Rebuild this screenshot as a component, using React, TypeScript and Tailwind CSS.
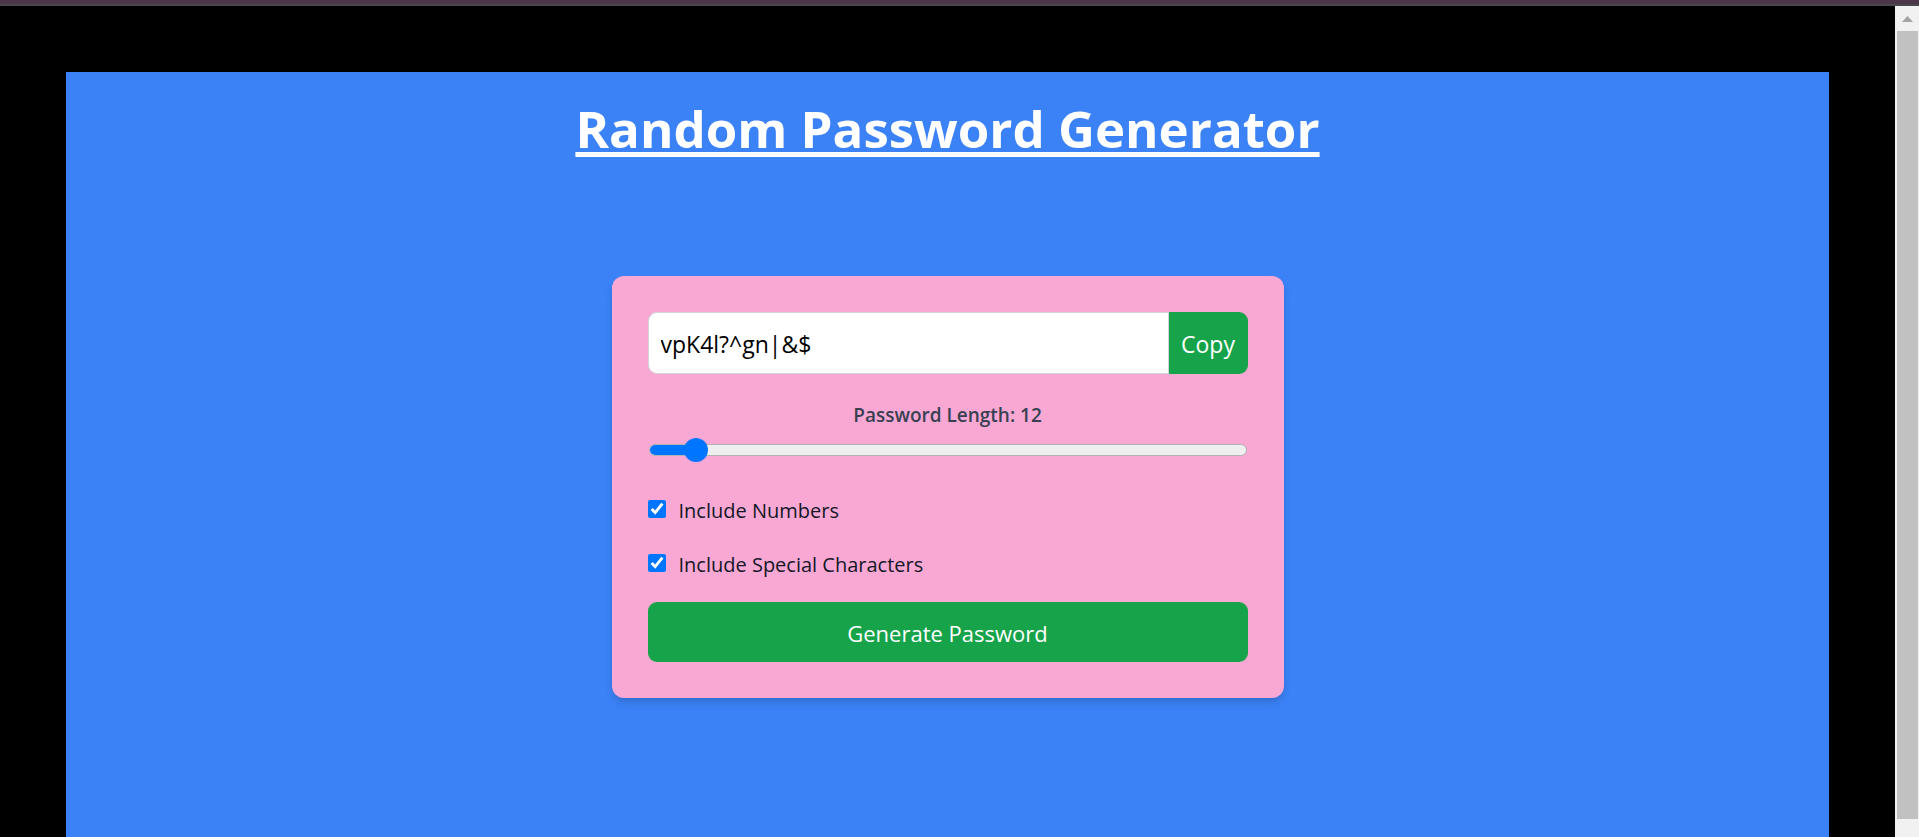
import { useId, useState } from "react";

const MIN_LENGTH = 6;
const MAX_LENGTH = 100;
const LETTERS = "ABCDEFGHIJKLMNOPQRSTUVWXYZabcdefghijklmnopqrstuvwxyz";
const DIGITS = "0123456789";
const SPECIALS = "!@#$%^&*?|~+-=_";

function createPassword(length: number, numbers: boolean, specials: boolean) {
  const pool = LETTERS + (numbers ? DIGITS : "") + (specials ? SPECIALS : "");
  return Array.from({ length }, () => pool[Math.floor(Math.random() * pool.length)]).join("");
}

type OptionProps = { label: string; checked: boolean; onChange: (value: boolean) => void };

function Option({ label, checked, onChange }: OptionProps) {
  const id = useId();
  return (
    <div className="flex h-[54px] items-start">
      <input
        id={id}
        type="checkbox"
        checked={checked}
        onChange={(event) => onChange(event.target.checked)}
        className="mt-2.5 size-[18px] accent-[#0075ff]"
      />
      <label htmlFor={id} className="pl-[13px] text-[20px] leading-[42px] text-[#111827]">
        {label}
      </label>
    </div>
  );
}

function LengthSlider({ id, value, onChange }: { id: string; value: number; onChange: (n: number) => void }) {
  const ratio = (value - MIN_LENGTH) / (MAX_LENGTH - MIN_LENGTH);
  const fill = `calc(12px + (100% - 24px) * ${ratio})`;
  return (
    <div className="grid h-6 items-center">
      <div className="relative col-start-1 row-start-1 mx-px h-3 overflow-hidden rounded-full border border-[#b2b2b2] bg-[#efefef]">
        <div className="absolute -inset-y-px -left-px bg-[#0075ff]" style={{ width: fill }} />
      </div>
      <input
        id={id}
        type="range"
        min={MIN_LENGTH}
        max={MAX_LENGTH}
        value={value}
        onChange={(event) => onChange(Number(event.target.value))}
        className="z-10 col-start-1 row-start-1 h-6 w-full appearance-none bg-transparent [&::-webkit-slider-thumb]:size-6 [&::-webkit-slider-thumb]:appearance-none [&::-webkit-slider-thumb]:rounded-full [&::-webkit-slider-thumb]:bg-[#0075ff]"
      />
    </div>
  );
}

function ScrollRail() {
  return (
    <div aria-hidden="true" className="flex w-6 shrink-0 flex-col bg-[#f1f1f1] pr-px pb-[18px] pl-0.5">
      <div className="flex h-[25px] items-center justify-center">
        <svg width="11" height="6" viewBox="0 0 11 6" fill="#a3a3a3">
          <path d="M5.5 0 11 6H0z" />
        </svg>
      </div>
      <div className="grow bg-[#c1c1c1]" />
    </div>
  );
}

export default function App() {
  const lengthId = useId();
  const [length, setLength] = useState(12);
  const [numbers, setNumbers] = useState(true);
  const [specials, setSpecials] = useState(true);
  const [password, setPassword] = useState("vpK4l?^gn|&$");

  return (
    <div className="flex h-screen flex-col bg-black font-['Open_Sans','Noto_Sans',sans-serif]">
      <div className="h-1.5 shrink-0 border-b-2 border-[#4a474a] bg-[#4b364a]" />
      <div className="flex min-h-0 grow">
        <div className="flex min-w-0 grow px-[66px] pt-[66px]">
          <main className="flex grow flex-col items-center bg-[#3b82f6] pt-5">
            <h1 className="text-center text-[51px] leading-[72px] font-bold text-white underline decoration-[5px] underline-offset-[4px]">
              Random Password Generator
            </h1>
            <section className="mt-28 w-full max-w-[672px] rounded-xl bg-[#f9a8d4] p-9 shadow-[0_6px_9px_-1px_rgba(0,0,0,0.1),0_3px_6px_-2px_rgba(0,0,0,0.1)]">
              <div className="flex h-[62px]">
                <input
                  aria-label="Password"
                  type="text"
                  readOnly
                  value={password}
                  className="min-w-0 grow rounded-l-[9px] border border-[#d1d5db] bg-white px-3 pt-0.5 text-[23px] text-black outline-none"
                />
                <button
                  type="button"
                  onClick={() => navigator.clipboard?.writeText(password)}
                  className="w-[79px] rounded-r-[9px] bg-[#16a34a] pt-0.5 text-[23px] text-white"
                >
                  Copy
                </button>
              </div>
              <div className="mt-6 flex flex-col">
                <label htmlFor={lengthId} className="text-center text-[19px] leading-[34px] font-semibold text-[#374151]">
                  Password Length: {length}
                </label>
                <div className="mt-1.5">
                  <LengthSlider id={lengthId} value={length} onChange={setLength} />
                </div>
              </div>
              <div className="mt-7">
                <Option label="Include Numbers" checked={numbers} onChange={setNumbers} />
                <Option label="Include Special Characters" checked={specials} onChange={setSpecials} />
              </div>
              <button
                type="button"
                onClick={() => setPassword(createPassword(length, numbers, specials))}
                className="mt-1 h-[60px] w-full rounded-[9px] bg-[#16a34a] pt-0.5 text-[22px] text-white"
              >
                Generate Password
              </button>
            </section>
          </main>
        </div>
        <ScrollRail />
      </div>
    </div>
  );
}
